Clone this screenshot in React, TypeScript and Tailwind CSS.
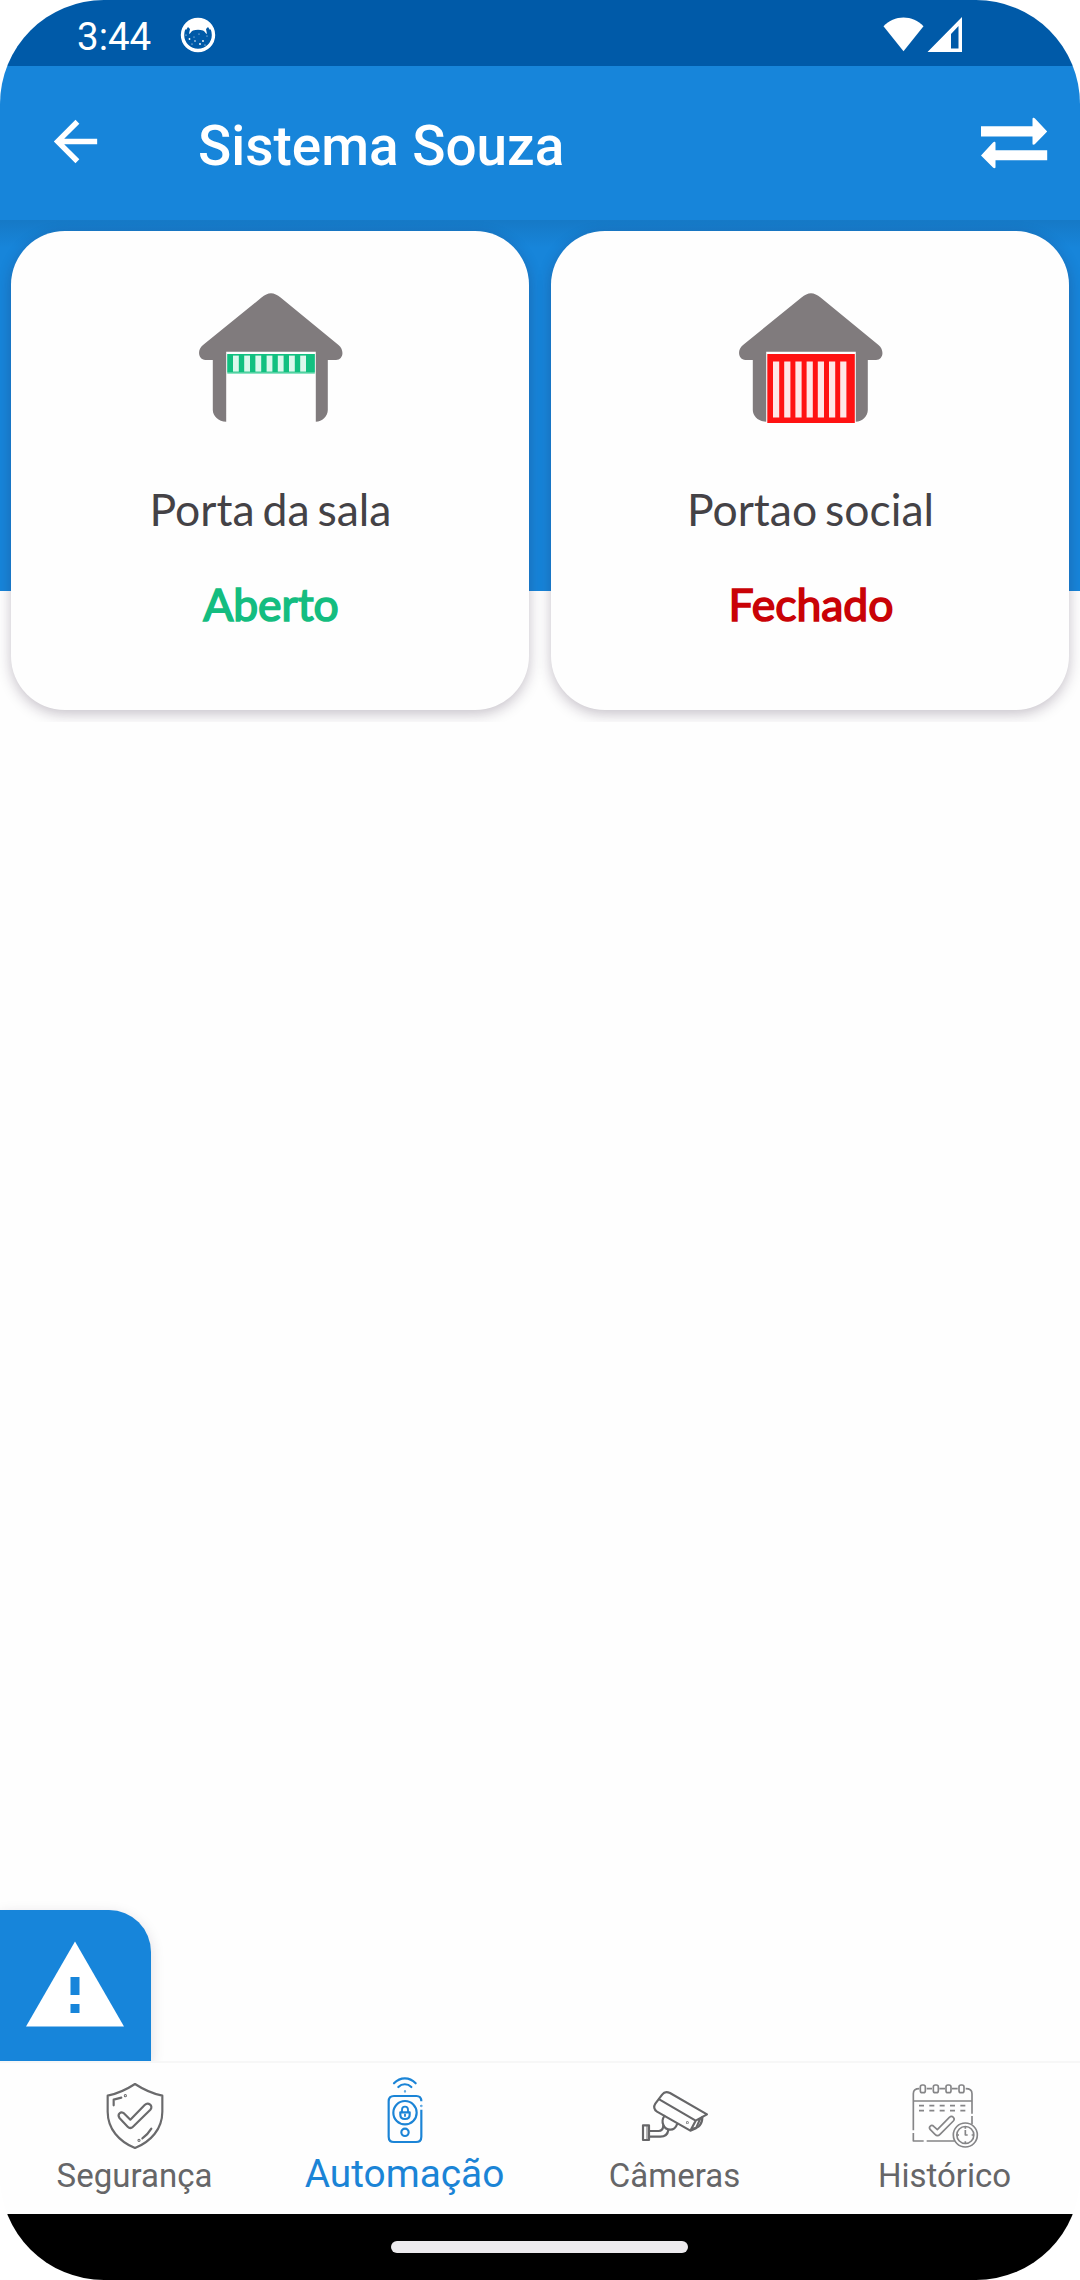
import type { ReactNode } from 'react'

type Door = {
  name: string
  open: boolean
}

const doors: Door[] = [
  { name: 'Porta da sala', open: true },
  { name: 'Portao social', open: false },
]

const barOffsets = [39, 50.2, 61.4, 72.6, 83.8, 95, 106.2]

function GarageIcon({ open }: { open: boolean }) {
  return (
    <svg width="152" height="140" viewBox="0 0 152 140">
      <path
        fill="#807b7d"
        d="M77 5.200c3 0 6.500 1.800 9.600 4.400L144.500 57C151 62.500 149 72 142 72H133.800V122C133.800 128.500 128 133.700 121.800 133.700V63.700H32.200V133.700C24.500 133.700 18.800 128 18.800 122V72H11.500C4.500 72 2.500 62 9 57L67.500 9.600C70.500 7 74 5.200 77 5.200Z"
      />
      {open ? (
        <>
          <rect x="33.300" y="66" width="87.500" height="20" fill="#8fe3c3" />
          <rect x="33.300" y="66" width="87.500" height="18.500" fill="#12c080" />
        </>
      ) : (
        <rect x="33.300" y="66" width="87.500" height="69" fill="#ff1212" />
      )}
      {barOffsets.map((x) => (
        <rect
          key={x}
          x={x}
          y={open ? 67.6 : 73.5}
          width={open ? 5.8 : 6.2}
          height={open ? 16 : 56}
          fill={open ? '#dcf8ec' : '#ffe6e6'}
        />
      ))}
    </svg>
  )
}

function ShieldIcon() {
  return (
    <svg width="72" height="80" viewBox="177 30 216 240" fill="none" stroke="#6a6a6c" strokeWidth="6.500" strokeLinejoin="round" strokeLinecap="round">
      <path d="M285 72C308 87 337 101 367 107V155C367 207 332 245 285 264C238 245 203 207 203 155V107C233 101 262 87 285 72Z" />
      <path d="M253 161L271 179L314 135C325 124 341 138 331 149L279 200C274 205 268 205 263 200L239 175C230 162 243 152 253 161Z" />
      <path d="M221 136V119L244 113M334 206C327 218 318 227 307 235" />
      <circle cx="256" cy="107" r="1.500" />
      <circle cx="297" cy="241" r="1.500" />
    </svg>
  )
}

function RemoteIcon() {
  return (
    <svg width="72" height="80" viewBox="237 30 216 240" fill="none" stroke="#1b84d6" strokeWidth="6.500" strokeLinecap="round" strokeLinejoin="round">
      <path d="M312 70C331 50 358 50 377 70M325 81C336 70 353 70 364 81" />
      <circle cx="345" cy="94" r="1" strokeWidth="5" />
      <path strokeLinecap="butt" d="M394 124C394 114 388 108 379 108H312C302 108 296 114 296 124V230C296 240 302 246 312 246H378C388 246 394 240 394 230V149" />
      <circle cx="394" cy="138" r="1" strokeWidth="5" />
      <circle cx="345" cy="158" r="35" />
      <circle cx="345" cy="217" r="11" />
      <path d="M331 157H359V164C359 172 354 177 345 177C336 177 331 172 331 164Z" />
      <path d="M336 156V149C336 137 354 137 354 149V156M345 163V168" strokeWidth="5.500" />
    </svg>
  )
}

function CameraIcon() {
  return (
    <svg width="72" height="80" viewBox="177 30 216 240" fill="none" stroke="#666668" strokeWidth="6.500" strokeLinejoin="round" strokeLinecap="round">
      <path d="M381 163L270 99C260 94 252 96 247 103L226 131C220 140 222 149 231 155L331 212L347 182ZM239 119L347 182M331 212L348 205L361 175" />
      <path d="M367 171C367 190 358 204 337 206M253 168C241 185 251 209 271 209C280 209 287 204 291 193" />
      <path d="M250 197C249 208 246 213 236 213H209M265 210C263 224 254 230 241 230H209" />
      <rect x="189" y="196" width="18" height="44" />
      <path strokeWidth="3" d="M201 196V240" />
      <circle cx="322" cy="188" r="1" />
    </svg>
  )
}

function CalendarIcon() {
  return (
    <svg width="72" height="80" viewBox="237 30 216 240" fill="none" stroke="#858587" strokeWidth="5" strokeLinejoin="round">
      <path d="M268 86C256 86 250 91 250 101V211M250 219V243H281M290 243H374M407 86C420 86 426 91 426 101V161M426 168V192M250 123H426M290 86H306M328 86H345M366 86H383" />
      <rect x="271" y="75" width="15" height="23" rx="6" />
      <rect x="310" y="75" width="15" height="23" rx="6" />
      <rect x="348" y="75" width="15" height="23" rx="6" />
      <rect x="387" y="75" width="15" height="23" rx="6" />
      <path strokeWidth="5.500" strokeDasharray="15 16" d="M267 137H408M267 152H408" />
      <path d="M312 200L322 209L358 172C367 165 377 175 370 183L330 223C325 228 320 228 315 223L301 209C294 200 304 192 312 200Z" />
      <circle cx="406" cy="225" r="36" />
      <circle cx="406" cy="225" r="25.500" />
      <path d="M406 210V225H413M406 199V206M406 244V251M380 225H387M425 225H432" />
    </svg>
  )
}

function StatusBar() {
  return (
    <div className="flex h-[66px] items-center bg-[#005aa8] pl-[77px] pr-[117px]">
      <span className="w-[103px] pt-2 text-[38.500px] leading-none text-white">3:44</span>
      <svg width="36" height="36" viewBox="0 0 36 36" className="mt-1">
        <circle cx="18" cy="18" r="15.500" fill="none" stroke="#fff" strokeWidth="3.400" />
        <path fill="#fff" d="M4 10C9 0 27 0 32 10L30 13L28 10L26 12L27 17C25 16.500 25 14 23 13.500C20 12.500 16 12.500 13 13.500C11 14 11 16.500 9 17L10 12L8 10L6 13Z" />
        <g fill="#fff">
          <circle cx="9.500" cy="22" r=".9" />
          <circle cx="14" cy="20" r=".5" />
          <circle cx="15" cy="24" r=".8" />
          <circle cx="20" cy="27" r=".9" />
          <circle cx="23" cy="24" r=".9" />
          <circle cx="27" cy="19" r=".5" />
          <circle cx="12" cy="27" r=".6" />
          <circle cx="19" cy="17" r=".5" />
          <circle cx="25" cy="28" r=".6" />
          <circle cx="6" cy="18" r=".6" />
        </g>
      </svg>
      <svg width="80" height="36" viewBox="0 0 80 36" fill="#fff" className="ml-auto mt-0.5">
        <path d="M.500 10.300C11-1.600 30-1.600 40.500 10.300L20.500 35.300Z" />
        <path fillRule="evenodd" d="M44.500 36L79 1V36ZM68 18V32.500H75.500V10Z" />
      </svg>
    </div>
  )
}

function AppBar() {
  return (
    <header className="flex h-[154px] items-center bg-[#1785da] pl-[43px] pr-8">
      <svg width="65" height="65" viewBox="0 0 24 24" fill="#fff" className="-mt-1">
        <path d="M20 11H7.830l5.590-5.590L12 4l-8 8 8 8 1.410-1.410L7.830 13H20v-2z" />
      </svg>
      <h1 className="ml-[90px] pt-[7px] text-[54.900px] font-medium leading-none text-white">Sistema Souza</h1>
      <svg width="68" height="52" viewBox="0 0 68 52" fill="#fff" className="ml-auto">
        <path d="M1 9.300H52.500V2C52.500 .5 54 .5 55 1.500L67.200 14.500L55 27C54 28 52.500 28 52.500 26.500V19.500H1Z" />
        <path d="M67.200 33.300H15.500V26C15.500 24.500 14 24.500 13 25.500L1 38.500L13 50.500C14 51.500 15.500 51.500 15.500 50V43.300H67.200Z" />
      </svg>
    </header>
  )
}

function DoorCard({ door }: { door: Door }) {
  return (
    <div className="flex h-[479px] flex-col items-center rounded-[54px] bg-[#fefefe] pt-[57px] font-['Lato',sans-serif] shadow-[0_4px_14px_rgba(40,20,50,0.26)]">
      <GarageIcon open={door.open} />
      <p className="mt-[55px] pl-px text-[44.500px] leading-[52px] text-[#444246] [word-spacing:-3.500px]">{door.name}</p>
      <p
        className={
          door.open
            ? 'mt-[43px] pl-[2px] text-[44.500px] leading-[52px] text-[#14bd80] [-webkit-text-stroke:1.600px_#14bd80]'
            : 'mt-[43px] pl-[2px] text-[44.500px] leading-[52px] text-[#c90206] [-webkit-text-stroke:1.600px_#c90206]'
        }
      >
        {door.open ? 'Aberto' : 'Fechado'}
      </p>
    </div>
  )
}

function NavItem({ label, icon, active }: { label: string; icon: ReactNode; active?: boolean }) {
  return (
    <div className="flex flex-1 flex-col items-center pt-[7px]">
      {icon}
      <span
        className={
          active
            ? 'mt-[2px] mr-px text-[38.800px] leading-[44px] text-[#1b84d6]'
            : 'mt-[4px] mr-px text-[33px] leading-[44px] text-[#666668]'
        }
      >
        {label}
      </span>
    </div>
  )
}

export default function App() {
  return (
    <div className="h-[2280px] w-[1080px] bg-white font-['Roboto',sans-serif]">
      <div className="flex h-full flex-col overflow-hidden rounded-[104px] bg-[#fefefe]">
        <StatusBar />
        <AppBar />

        <main className="flex flex-1 flex-col bg-[linear-gradient(#1679c6_0px,#1785da_28px,#1785da_371px,#fefefe_371px)]">
          <div className="grid h-[502px] grid-cols-2 gap-[22px] overflow-hidden p-[11px]">
            {doors.map((door) => (
              <DoorCard key={door.name} door={door} />
            ))}
          </div>

          {/* Alert shortcut */}
          <div className="mt-auto overflow-hidden pt-4">
            <button className="flex h-[151px] w-[151px] items-center justify-center rounded-tr-[42px] bg-[#1785da] shadow-[0_4px_14px_rgba(40,20,50,0.15)]">
              <svg width="98" height="86" viewBox="0 0 98 86" className="-mt-[4px] mr-px">
                <path fill="#fff" d="M49 .5L98 85.500H0Z" />
                <path fill="#1785da" d="M44.500 36h9v18h-9zM44.500 63h9v9h-9z" />
              </svg>
            </button>
          </div>
        </main>

        <nav className="flex h-[153px] border-t-2 border-[#f7f7f7] bg-[#fefefe]">
          <NavItem label="Segurança" icon={<ShieldIcon />} />
          <NavItem label="Automação" icon={<RemoteIcon />} active />
          <NavItem label="Câmeras" icon={<CameraIcon />} />
          <NavItem label="Histórico" icon={<CalendarIcon />} />
        </nav>

        <div className="flex h-[66px] justify-center bg-black pt-[27px]">
          <div className="mr-[2px] h-3 w-[297px] rounded-full bg-[#eceaed]" />
        </div>
      </div>
    </div>
  )
}
